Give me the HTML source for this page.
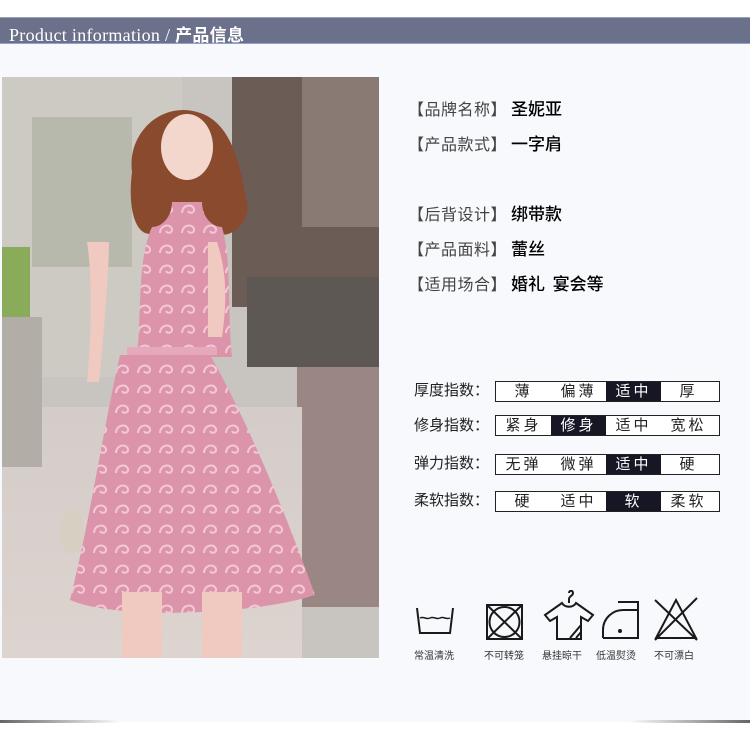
<!DOCTYPE html>
<html><head><meta charset="utf-8"><style>
*{margin:0;padding:0;box-sizing:border-box}
body{width:750px;height:739px;background:#fff;position:relative;overflow:hidden;font-family:"Liberation Sans","Noto Sans CJK SC",sans-serif;color:#222}
.panel{position:absolute;left:0;top:44px;width:750px;height:678px;background:#f8f9fc}
.bar{position:absolute;left:0;top:17px;width:750px;height:27px;background:#6c718b;border-top:1px solid #9aa0b8;border-bottom:1px solid #8fa2d0}
.bar span{position:absolute;left:9px;top:3px;color:#fff;font-family:"Liberation Serif","Noto Serif CJK SC",serif;font-size:18px;letter-spacing:0.3px}
.bar b{font-family:"Liberation Sans","Noto Sans CJK SC",sans-serif;font-weight:bold;font-size:17px}
.sh1{position:absolute;left:0;top:720px;width:120px;height:3px;background:linear-gradient(90deg,#666,rgba(255,255,255,0))}
.sh2{position:absolute;right:0;top:720px;width:120px;height:3px;background:linear-gradient(270deg,#666,rgba(255,255,255,0))}
.info{position:absolute;left:408px;font-size:16px;line-height:20px;white-space:nowrap}
.info i{font-style:normal;color:#444;letter-spacing:0.5px}
.info b{font-weight:500;color:#000;margin-left:4px;font-size:17px;font-family:"Noto Sans CJK SC",sans-serif}
.lab{position:absolute;left:414px;font-size:15px;line-height:20px;color:#222}
.box{position:absolute;left:495px;width:225px;height:21px;border:1px solid #222;background:#fff;display:flex;font-size:15px;line-height:19px}
.box div{width:55px;text-align:center;letter-spacing:3px}
.box .on{background:#161625;color:#fff}
.cap{position:absolute;top:647px;font-size:10px;color:#333;white-space:nowrap}
</style></head><body>
<div class="panel"></div>
<div class="bar"><span>Product information / <b>产品信息</b></span></div>
<div class="sh1"></div><div class="sh2"></div>

<svg style="position:absolute;left:2px;top:77px" width="377" height="581" viewBox="0 0 377 581">
<defs>
<linearGradient id="fl" x1="0" y1="0" x2="0" y2="1"><stop offset="0" stop-color="#d4ccc8"/><stop offset="1" stop-color="#ddd4d0"/></linearGradient>
<pattern id="lace" width="22" height="20" patternUnits="userSpaceOnUse"><rect width="22" height="20" fill="#dc94ab"/><path d="M4 16c0-8 10-10 12-4c1 4-5 5-6 2" fill="none" stroke="#f3c7d6" stroke-width="2"/></pattern>
</defs>
<rect width="377" height="581" fill="#c8c4bf"/>
<rect x="0" y="0" width="180" height="300" fill="#cdc9c3"/>
<rect x="30" y="40" width="100" height="150" fill="#b6b9ab"/>
<rect x="0" y="170" width="28" height="90" fill="#8aab5a"/>
<rect x="230" y="0" width="147" height="230" fill="#6b5c56"/>
<rect x="300" y="0" width="77" height="150" fill="#8a7a74"/>
<rect x="245" y="200" width="132" height="90" fill="#5e5854"/>
<rect x="295" y="290" width="82" height="240" fill="#9a8682"/>
<rect x="0" y="330" width="300" height="251" fill="url(#fl)"/>
<rect x="0" y="240" width="40" height="150" fill="#b3ada7"/>
<path d="M130 95c-5-40 30-70 65-60c40 10 45 70 50 90c5 20-20 40-30 30l-60 0c-20 10-30-20-25-60z" fill="#8a4a2e"/>
<ellipse cx="185" cy="70" rx="26" ry="33" fill="#f3d6cc"/>
<path d="M150 150c10 0 20-10 20-25h30c0 15 10 25 20 25c10 35 5 80 10 130h-95c5-50 0-95 15-130z" fill="url(#lace)"/>
<rect x="125" y="270" width="90" height="8" fill="#e6a8bb"/>
<path d="M85 165c5 30 5 90 0 140l12 0c5-50 10-110 10-140z" fill="#f0c9c0"/>
<path d="M215 165c10 30 10 60 5 95l-14 0c0-30 0-65 0-95z" fill="#f0c9c0"/>
<path d="M118 278h90c40 70 80 170 105 240c-60 20-200 25-245 5c20-80 35-180 50-245z" fill="url(#lace)"/>
<rect x="120" y="515" width="40" height="66" fill="#f0c9c0"/>
<rect x="200" y="515" width="40" height="66" fill="#f0c9c0"/>
<ellipse cx="70" cy="455" rx="12" ry="22" fill="#d8cfc3"/>
</svg>

<div class="info" style="top:98px"><i>【品牌名称】</i><b>圣妮亚</b></div>
<div class="info" style="top:133px"><i>【产品款式】</i><b>一字肩</b></div>
<div class="info" style="top:203px"><i>【后背设计】</i><b>绑带款</b></div>
<div class="info" style="top:238px"><i>【产品面料】</i><b>蕾丝</b></div>
<div class="info" style="top:273px"><i>【适用场合】</i><b>婚礼&nbsp; 宴会等</b></div>

<div class="lab" style="top:381px">厚度指数：</div>
<div class="box" style="top:381px"><div>薄</div><div>偏薄</div><div class="on">适中</div><div>厚</div></div>
<div class="lab" style="top:416px">修身指数：</div>
<div class="box" style="top:415px"><div>紧身</div><div class="on">修身</div><div>适中</div><div>宽松</div></div>
<div class="lab" style="top:454px">弹力指数：</div>
<div class="box" style="top:454px"><div>无弹</div><div>微弹</div><div class="on">适中</div><div>硬</div></div>
<div class="lab" style="top:491px">柔软指数：</div>
<div class="box" style="top:491px"><div>硬</div><div>适中</div><div class="on">软</div><div>柔软</div></div>

<svg style="position:absolute;left:400px;top:590px" width="320" height="55" viewBox="0 0 320 55" fill="none" stroke="#1a1a1a" stroke-width="2">
<path d="M17 18l3 25h30l3-25"/><path d="M20 28c4-2 6 2 10 0s6 2 10 0s6 2 10 0" stroke-width="1.5"/>
<rect x="87" y="15" width="35" height="34"/><circle cx="104.5" cy="32" r="15"/><path d="M87 15l35 34M122 15l-35 34"/>
<path d="M162 13l-17 12l5 6l7-4v22h24v-22l7 4l5-6l-17-12c-3 5-11 5-14 0z"/><path d="M169 13v-4c0-3 4-3 4-6s-4-3-4 0"/><path d="M170 48l11-13M176 48l5-6"/>
<path d="M203 48v-8c0-12 10-20 20-20h15v-8h-20"/><path d="M203 48h35v-28"/><circle cx="220" cy="41" r="1" fill="#1a1a1a"/>
<path d="M256 48l20-38l20 38z"/><path d="M255 10l42 40M297 8l-42 42"/>
</svg>
<div class="cap" style="left:414px">常温清洗</div>
<div class="cap" style="left:484px">不可转笼</div>
<div class="cap" style="left:542px">悬挂晾干</div>
<div class="cap" style="left:596px">低温熨烫</div>
<div class="cap" style="left:654px">不可漂白</div>
</body></html>
